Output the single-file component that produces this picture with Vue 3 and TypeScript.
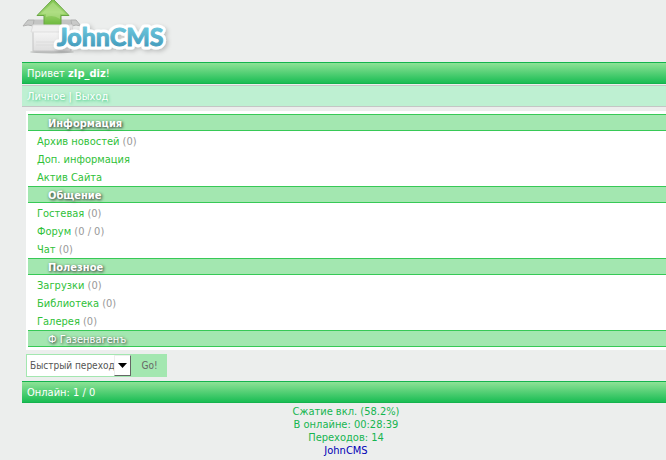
<script setup lang="ts">
interface Item {
  label: string
  count?: string
}
interface Section {
  title: string
  items: Item[]
}

const sections: Section[] = [
  {
    title: 'Информация',
    items: [
      { label: 'Архив новостей', count: '(0)' },
      { label: 'Доп. информация' },
      { label: 'Актив Сайта' },
    ],
  },
  {
    title: 'Общение',
    items: [
      { label: 'Гостевая', count: '(0)' },
      { label: 'Форум', count: '(0 / 0)' },
      { label: 'Чат', count: '(0)' },
    ],
  },
  {
    title: 'Полезное',
    items: [
      { label: 'Загрузки', count: '(0)' },
      { label: 'Библиотека', count: '(0)' },
      { label: 'Галерея', count: '(0)' },
    ],
  },
]
</script>

<template>
  <div class="page">
    <header class="brand">
      <svg class="logo" width="160" height="62" viewBox="0 0 160 62" role="img" aria-label="JohnCMS">
        <defs>
          <linearGradient id="arrow" x1="0" y1="0" x2="0" y2="1">
            <stop offset="0" stop-color="#7cc04c" />
            <stop offset="0.5" stop-color="#a0d670" />
            <stop offset="1" stop-color="#6cb83c" />
          </linearGradient>
          <linearGradient id="box" x1="0" y1="0" x2="0" y2="1">
            <stop offset="0" stop-color="#dcdcdc" />
            <stop offset="0.4" stop-color="#f4f4f4" />
            <stop offset="1" stop-color="#dedede" />
          </linearGradient>
          <linearGradient id="word" x1="0" y1="0" x2="0" y2="1">
            <stop offset="0.2" stop-color="#6cc6dc" />
            <stop offset="0.85" stop-color="#459dbd" />
          </linearGradient>
          <filter id="soft" x="-10%" y="-30%" width="125%" height="180%">
            <feDropShadow dx="2" dy="2" stdDeviation="2" flood-color="#000" flood-opacity="0.2" />
          </filter>
        </defs>
        <ellipse cx="30" cy="52" rx="22" ry="1.5" fill="#b9bbba" />
        <path d="M12 20H49V51H11V26Z" fill="url(#box)" stroke="#c4c4c4" />
        <path d="M12 20H49V25H12Z" fill="#c4c5c4" />
        <path d="M31 -1L47 15.500H39V25H22V15.500H15Z" fill="url(#arrow)" stroke="#68a544" />
        <path d="M31 2L43 14H38V19Q31 14 24 17V14H19Z" fill="#c5eaa0" opacity="0.4" />
        <path d="M12 20L6 20L1 26L6 25L11 26Z" fill="#c9cac9" stroke="#b0b1b0" />
        <path d="M49 20L54 20L59 26L54 25L50 26Z" fill="#c9cac9" stroke="#b0b1b0" />
        <path d="M11 25H50L51 32H9Z" fill="#f0f0f0" stroke="#dfdfdf" />
        <path d="M14 42H34M14 45H34" stroke="#dcdcdc" />
        <g class="word">
          <text x="35" y="46" class="word-edge" filter="url(#soft)">JohnCMS</text>
          <text x="35" y="46" class="word-fill">JohnCMS</text>
        </g>
      </svg>
    </header>

    <div class="bar">Привет <b>zIp_diz</b>!</div>
    <nav class="user-nav"><a href="#">Личное</a> | <a href="#">Выход</a></nav>

    <main class="menu">
      <section v-for="section in sections" :key="section.title">
        <h2 class="heading">{{ section.title }}</h2>
        <ul class="list">
          <li v-for="item in section.items" :key="item.label">
            <a href="#">{{ item.label }}</a><template v-if="item.count">&nbsp;{{ item.count }}</template>
          </li>
        </ul>
      </section>
      <h2 class="heading plain"><a href="#">Ф Газенвагенъ</a></h2>
    </main>

    <form class="jump" @submit.prevent>
      <span class="picker">
        <select aria-label="Быстрый переход">
          <option>Быстрый переход</option>
        </select>
        <span class="drop" aria-hidden="true">
          <svg width="9" height="5" viewBox="0 0 9 5"><path d="M0 0H9L4.500 5Z" fill="#000" /></svg>
        </span>
      </span>
      <button type="submit">Go!</button>
    </form>

    <div class="bar"><a href="#">Онлайн: 1 / 0</a></div>

    <footer class="stats">
      <div>Сжатие вкл. (58.2%)</div>
      <div>В онлайне: 00:28:39</div>
      <div>Переходов: 14</div>
      <div><a href="#">JohnCMS</a></div>
    </footer>
  </div>
</template>

<style>
body {
  background: #eceeed;
}
</style>

<style scoped>
.page {
  padding-left: 22px;
  font-family: Tahoma, "DejaVu Sans Condensed", "DejaVu Sans", sans-serif;
  font-size: 11px;
  line-height: 13px;
}
a {
  color: inherit;
  text-decoration: none;
}
.logo {
  display: block;
}
.word {
  font-family: Lato, sans-serif;
  font-size: 25px;
  font-weight: 700;
}
.word-edge {
  fill: #fff;
  stroke: #fff;
  stroke-width: 7px;
  stroke-linejoin: round;
}
.word-fill {
  fill: url(#word);
  stroke: url(#word);
  stroke-width: 1px;
  stroke-linejoin: round;
}
.bar {
  box-sizing: border-box;
  height: 22px;
  padding: 4px 5px;
  border: solid #14b34d;
  border-width: 1px 0;
  background: linear-gradient(#8ee296, #1abd54);
  color: #fff;
}
.user-nav {
  box-sizing: border-box;
  height: 22px;
  margin-top: 1px;
  padding: 4px 5px;
  border: solid #c4c6c5;
  border-width: 1px 0;
  background: #bef0d2;
  color: #fff;
  text-shadow: 1px 1px 3px #2fc277;
}
.menu {
  margin: 4px 0 0 4px;
  padding: 3px 0 3px 2px;
  background: #fff;
}
.heading {
  box-sizing: border-box;
  height: 17px;
  margin: 0;
  padding: 1px 20px;
  border: solid #37c956;
  border-width: 1px 0;
  background: #a3e7b0;
  color: #fff;
  font-size: 11px;
  line-height: 15px;
  text-shadow: 1px 1px 3px #222;
}
.plain {
  font-weight: 400;
}
.list {
  margin: 0;
  padding: 1px 9px 0;
  list-style: none;
  color: #999;
}
.list li {
  padding-top: 2px;
  line-height: 16px;
}
.list a {
  color: #2fc138;
}
.jump {
  display: flex;
  align-items: stretch;
  height: 23px;
  margin: 4px 0 4px 4px;
}
.picker {
  display: flex;
  position: relative;
  box-sizing: border-box;
  width: 106px;
  border: 1px solid #a3e7b0;
  background: #fff;
}
select {
  flex: 1;
  min-width: 0;
  padding: 0 0 0 3px;
  border: 0;
  appearance: none;
  background: #fff;
  color: #555;
  font-family: inherit;
  font-size: 10px;
}
.drop {
  display: flex;
  position: absolute;
  top: 0;
  right: 0;
  bottom: 0;
  box-sizing: border-box;
  width: 17px;
  align-items: center;
  justify-content: center;
  border: 1px solid;
  border-color: #eee #666 #666 #eee;
  background: #fff;
  pointer-events: none;
}
button {
  width: 35px;
  padding: 0;
  border: 0;
  background: #a3e7b0;
  color: #666;
  font-family: inherit;
  font-size: 10px;
}
.stats {
  padding: 2px 0 2px 4px;
  color: #16b550;
  text-align: center;
}
.stats a {
  color: #0000b5;
}
</style>
